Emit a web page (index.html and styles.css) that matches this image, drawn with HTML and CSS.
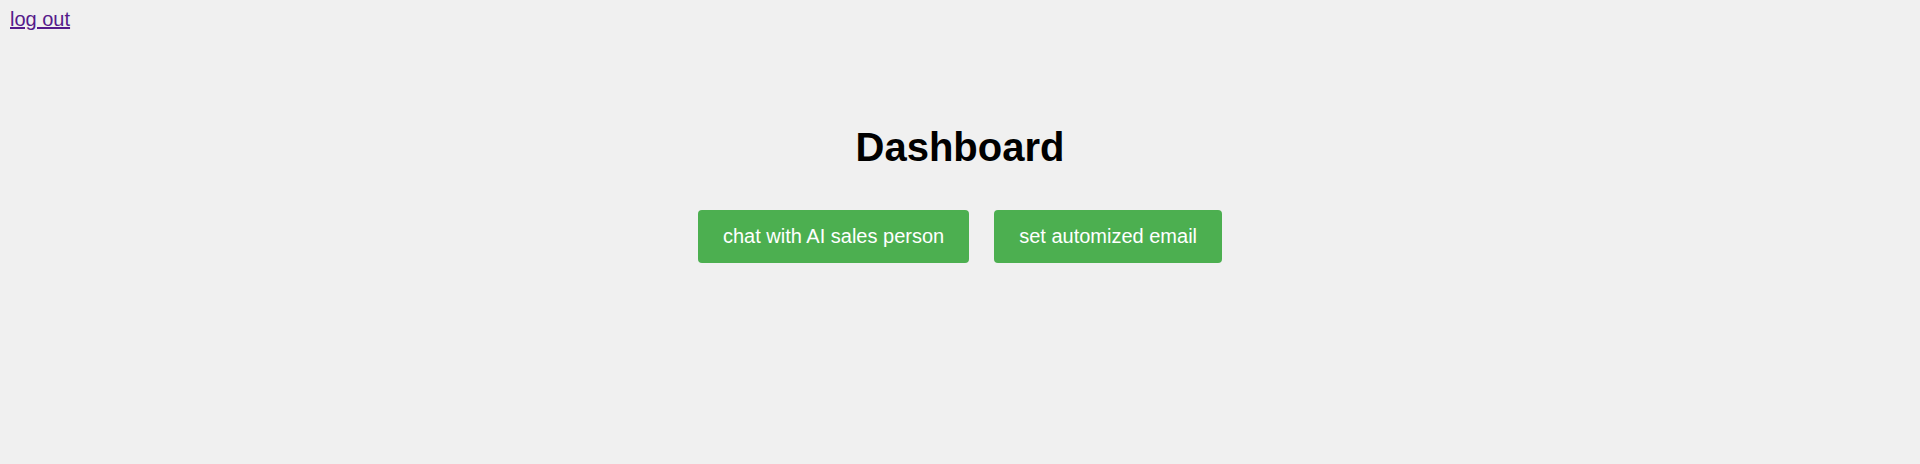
FILE: index.html
```html
<!DOCTYPE html>
<html>
<head>
<meta charset="utf-8">
<link rel="stylesheet" href="styles.css">
</head>
<body>
<div class="topbar"><a class="logout" href="#logout">log out</a></div>
<main class="dashboard">
  <h1 class="title">Dashboard</h1>
  <div class="actions">
    <button class="btn">chat with AI sales person</button>
    <button class="btn">set automized email</button>
  </div>
</main>
</body>
</html>
```
FILE: styles.css
```css
html, body {
  background: #f0f0f0;
}
body {
  margin: 8px;
  font-family: "Liberation Sans", Arial, sans-serif;
}
.topbar {
  font-size: 20px;
  line-height: 23px;
  padding-left: 2px;
}
.logout {
  color: #551a8b;
}
.dashboard {
  padding-top: 93px;
  text-align: center;
}
.title {
  margin: 0 0 40px;
  font-size: 40px;
  font-weight: bold;
  color: #000;
  line-height: 46px;
}
.actions {
  display: flex;
  justify-content: center;
  gap: 25px;
}
.btn {
  background: #4caf50;
  color: #fff;
  border: none;
  border-radius: 4px;
  font-family: "Liberation Sans", Arial, sans-serif;
  font-size: 20px;
  line-height: 23px;
  padding: 15px 25px;
  cursor: pointer;
}
```
